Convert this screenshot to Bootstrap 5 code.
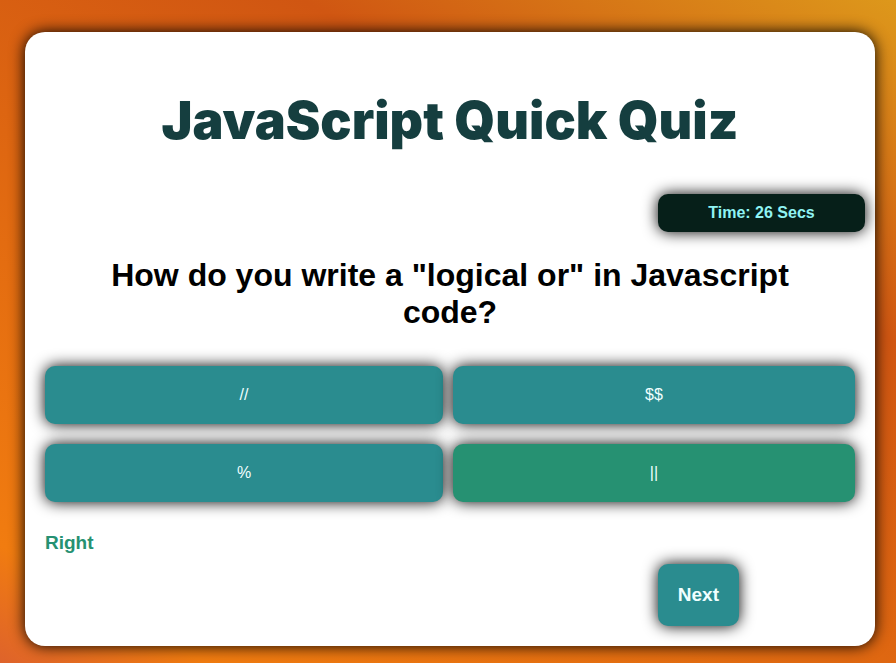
<!DOCTYPE html>
<html lang="en">
<head>
<meta charset="utf-8">
<meta name="viewport" content="width=device-width, initial-scale=1">
<title>JavaScript Quick Quiz</title>
<link href="https://cdn.jsdelivr.net/npm/bootstrap@5.3.0/dist/css/bootstrap.min.css" rel="stylesheet">
<style>
body {
  font-family: "Liberation Sans", Arial, sans-serif;
  color: #000;
  background: linear-gradient(30deg, #de632b 0%, #f17c10 10%, #d05612 71%, #dd981b 100%) no-repeat;
}
.quiz-page { padding: 32px 21px 17px 25px; }
.quiz-panel { border-radius: 20px; padding: 64px 20px 20px; box-shadow: 0 0 15px #000; }
.quiz-title { font: 900 52px/50px Inter, sans-serif; color: #153e3f; margin-bottom: 48px; }
.quiz-raised { border: 0; border-radius: 10px; box-shadow: 0 0 15px #000; }
.quiz-timer { width: 207px; margin-right: -10px; line-height: 18px; padding: 10px; background: #061f19; color: #8ff3f3; }
.quiz-question { font-size: 32px; line-height: 37px; margin: 25px 20px 35px; }
.quiz-answers { display: grid; grid-template-columns: 398fr 402fr; gap: 20px 10px; }
.quiz-choice { background: #2a8c8f; color: #f0ffff; line-height: 18px; padding: 20px; }
.quiz-choice.quiz-correct { background: #269172; }
.quiz-result { font-size: 19px; line-height: 22px; color: #269172; margin: 30px 0 10px; }
.quiz-next { font-size: 19px; line-height: 22px; margin-right: 116px; }
</style>
<script src="https://cdn.jsdelivr.net/npm/bootstrap@5.3.0/dist/js/bootstrap.bundle.min.js"></script>
</head>
<body class="min-vh-100">
<div class="quiz-page">
  <main class="quiz-panel bg-white d-flex flex-column">
    <h1 class="quiz-title text-center">JavaScript Quick Quiz</h1>
    <div class="quiz-timer quiz-raised align-self-end text-center fw-bold">Time: 26 Secs</div>
    <h2 class="quiz-question text-center fw-bold">How do you write a "logical or" in Javascript code?</h2>
    <div class="quiz-answers">
      <button type="button" class="quiz-choice quiz-raised">//</button>
      <button type="button" class="quiz-choice quiz-raised">$$</button>
      <button type="button" class="quiz-choice quiz-raised">%</button>
      <button type="button" class="quiz-choice quiz-raised quiz-correct">||</button>
    </div>
    <p class="quiz-result fw-bold">Right</p>
    <button type="button" class="quiz-choice quiz-raised quiz-next align-self-end fw-bold">Next</button>
  </main>
</div>
</body>
</html>
